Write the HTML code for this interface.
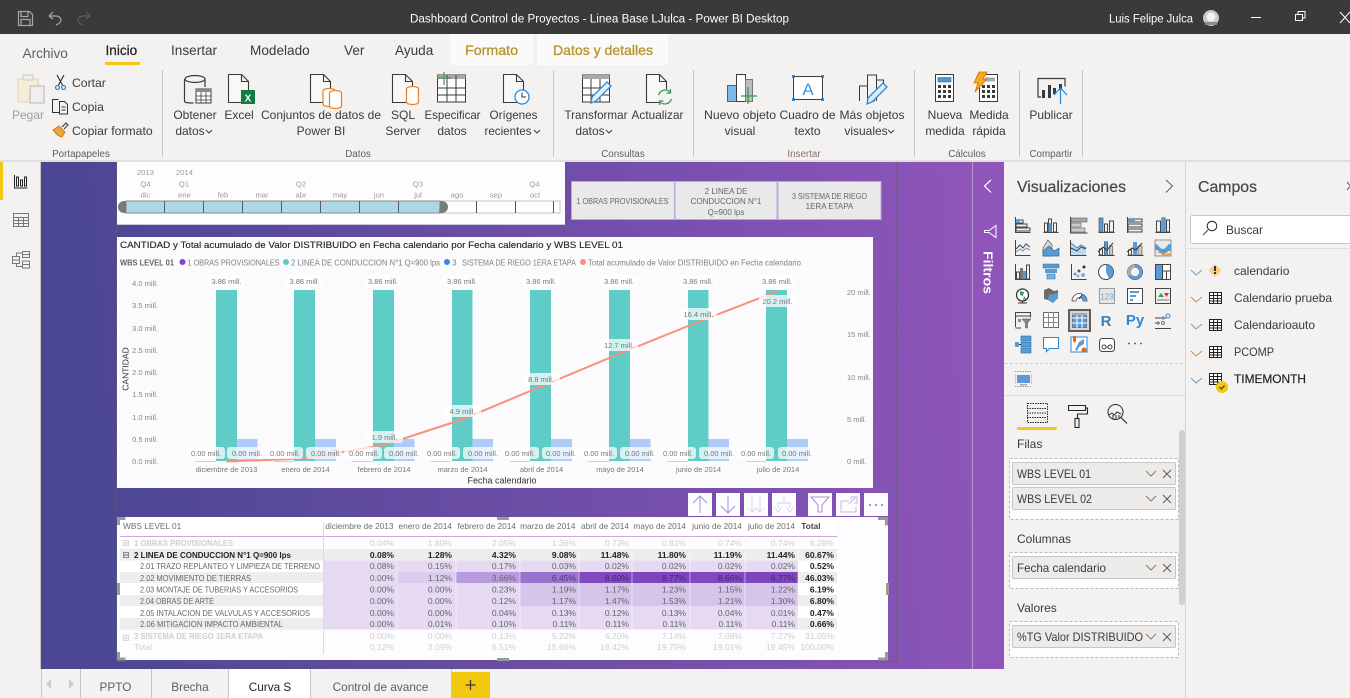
<!DOCTYPE html>
<html lang="es"><head><meta charset="utf-8"><title>Dashboard Control de Proyectos</title>
<style>
html,body{margin:0;padding:0;width:1350px;height:698px;overflow:hidden;background:#f3f2f1}
svg{display:block;font-family:"Liberation Sans",Arial,sans-serif}
.rb{font-size:12px;fill:#3b3a39;text-anchor:middle}
.rl{font-size:12.2px;fill:#3b3a39}
.gl{font-size:9.8px;fill:#605e5c;text-anchor:middle}
.tab{font-size:13.6px;fill:#3b3a39}
.i{fill:none;stroke:#3a3a3a;stroke-width:1.2}
.ic{fill:none;stroke:#444;stroke-width:1}
.bl{fill:#5b9bd5}
.tl{font-size:7.6px;fill:#9a9a9a;text-anchor:middle}
.ax{font-size:7.5px;fill:#858585}
.axm{font-size:7.5px;fill:#777;text-anchor:middle}
.dl{font-size:7.5px;fill:#777;text-anchor:middle}
.lg{font-size:8.2px;fill:#808080}
.slc{font-size:8px;fill:#666;text-anchor:middle}
.th{font-size:8.3px;fill:#6c6c6c;text-anchor:end}
.n{font-size:8.5px;fill:#666;text-anchor:end}
.f{font-size:8.5px;fill:#cfcfcf;text-anchor:end}
.bd{font-size:8.5px;fill:#222;font-weight:bold;text-anchor:end}
.lb{font-size:8.5px;fill:#666}
.ps{font-size:12px;fill:#3b3a39}
.sh{font-size:11.8px;fill:#605e5c;text-anchor:middle}
.fd{font-size:12px;fill:#3b3a39}
.och{fill:none;stroke:#c68a4e;stroke-width:1}
.bch{fill:none;stroke:#6c9cc4;stroke-width:1}
.act{fill:none;stroke:#a98fd6;stroke-width:1}
</style></head><body>
<svg width="1350" height="698" viewBox="0 0 1350 698" xmlns="http://www.w3.org/2000/svg">
<defs>
<linearGradient id="cv" gradientUnits="userSpaceOnUse" x1="100" y1="420" x2="975" y2="350">
<stop offset="0" stop-color="#4c4795"/><stop offset=".45" stop-color="#6a4da4"/><stop offset="1" stop-color="#8d55ba"/>
</linearGradient>
<g id="doc"><path d="M.5.5h13l7 7v21H.5zM13.500.5v7h7" fill="#f8f8f7" stroke="#3a3a3a" stroke-width="1.1"/></g>
<g id="cyl"><ellipse cx="6.500" cy="3" rx="6" ry="2.500" fill="#fff" stroke="#e8801e" stroke-width="1.200"/><path d="M.5 3v13c0 1.500 2.500 2.500 6 2.500s6-1 6-2.500V3" fill="#fff" stroke="#e8801e" stroke-width="1.200"/></g>
<path id="dn" d="M0 0l3 3 3-3" fill="none" stroke="#3b3a39" stroke-width="1"/>
<path id="pc" d="M0 0l5 5 5-5" fill="none" stroke="#8a7a6a" stroke-width="1"/>
<path id="cl" d="M0 0l8 8M8 0l-8 8" fill="none" stroke="#605e5c" stroke-width="1"/>
<g id="tbl"><rect x=".5" y=".5" width="12" height="11" fill="#fff" stroke="#222"/><path d="M.5 3.500h12M.5 6.500h12M.5 9h12M4.500 1v10M8.500 1v10" stroke="#222" stroke-width="1" fill="none"/></g>
</defs>

<!-- title bar -->
<rect width="1350" height="34" fill="#3b3a39"/>
<g fill="none" stroke="#a9a7a5" stroke-width="1.200">
<path d="M18.500 11.500h11l3 3v11h-14zM21 11.500v5h7v-5M21 25.500v-6h9v6"/>
<path d="M49 16l4-4M49 16h7c3 0 5 2 5 4s-2 4-5 5M49 16l4 3" />
</g>
<path d="M90 16l-4-4M90 16h-7c-3 0-5 2-5 4s2 4 5 5M90 16l-4 3" fill="none" stroke="#5e5d5b" stroke-width="1.200"/>
<text x="410" y="22.500" font-size="12.300" fill="#fff" textLength="379" lengthAdjust="spacingAndGlyphs">Dashboard Control de Proyectos - Linea Base LJulca - Power BI Desktop</text>
<text x="1109" y="22.500" font-size="12.300" fill="#fff" textLength="84" lengthAdjust="spacingAndGlyphs">Luis Felipe Julca</text>
<circle cx="1211" cy="18" r="8" fill="#c9c9c9"/><circle cx="1211" cy="17" r="4.500" fill="#f2f2f2"/><rect x="1205" y="22" width="12" height="3" fill="#8c8c8c"/>
<path d="M1251 17.500h10" stroke="#fff"/>
<path d="M1295.500 20.500h7v-6h-7zM1298 14v-2.500h7v6.500h-2.500" fill="none" stroke="#fff" stroke-width="1"/>
<path d="M1340 12l10 11M1350 12l-10 11" stroke="#fff" stroke-width="1"/>

<!-- ribbon -->
<rect y="34" width="1350" height="127" fill="#f3f2f1"/>
<rect x="450" y="34" width="83" height="31" fill="#fbfafa"/>
<rect x="537" y="34" width="131" height="31" fill="#fbfafa"/>
<text x="22.500" y="58" class="tab" style="fill:#605e5c">Archivo</text>
<text x="105.500" y="55" class="tab" style="font-weight:500;fill:#252423" stroke="#252423" stroke-width=".25">Inicio</text>
<rect x="105" y="62" width="35" height="3" fill="#f2c811"/>
<text x="171" y="55" class="tab">Insertar</text>
<text x="250" y="55" class="tab">Modelado</text>
<text x="344" y="55" class="tab">Ver</text>
<text x="395" y="55" class="tab">Ayuda</text>
<text x="465" y="55" class="tab" style="fill:#b8962e" stroke="#b8962e" stroke-width=".35" textLength="53" lengthAdjust="spacingAndGlyphs">Formato</text>
<text x="553" y="55" class="tab" style="fill:#b8962e" stroke="#b8962e" stroke-width=".35" textLength="100" lengthAdjust="spacingAndGlyphs">Datos y detalles</text>
<g stroke="#c8c6c4"><path d="M162.500 70v87M553.500 70v87M693.500 70v87M914.500 70v87M1019.500 70v87M1082.500 70v87"/></g>

<!-- Portapapeles -->
<rect x="18" y="79" width="20" height="23" fill="#f7ecd9" stroke="#e8cfa6"/><rect x="23" y="75" width="10" height="5" fill="#eee" stroke="#c9c7c5"/>
<rect x="30" y="86" width="14" height="17" fill="#f0efee" stroke="#b8b6b4"/>
<text x="28" y="119" class="rb" style="fill:#a19f9d">Pegar</text>
<path d="M57 75l6 11M64 75l-6 11" stroke="#333" stroke-width="1.200"/><circle cx="57.500" cy="87.500" r="2" fill="none" stroke="#2b88d8" stroke-width="1.200"/><circle cx="63.500" cy="87.500" r="2" fill="none" stroke="#2b88d8" stroke-width="1.200"/>
<text x="72" y="87" class="rl">Cortar</text>
<path d="M59 112.500h-6.500v-13h6M59.500 101.500h5l3 3v9.500h-8zM61.500 107h4M61.500 110h4" fill="none" stroke="#333"/>
<text x="72" y="111" class="rl">Copia</text>
<path d="M53 130l6-4 6 6-3 5c-3 0-6-3-9-7z" fill="#f0a33a" stroke="#c96f00" stroke-width=".8"/><path d="M62 127l4-4 2 2-4 4" fill="none" stroke="#333"/>
<text x="72" y="135" class="rl">Copiar formato</text>
<text x="81" y="157" class="gl">Portapapeles</text>

<!-- Datos -->
<g class="i"><path d="M184.500 79v22c0 1.500 2 2 9 2"/><ellipse cx="195" cy="79" rx="10" ry="3.500"/><path d="M205 79v8"/></g>
<rect x="196" y="89" width="15" height="14" fill="#fff" stroke="#3a3a3a"/><rect x="196" y="89" width="15" height="3" fill="#888"/><path d="M196 96h15M196 100h15M201 92v11M206 92v11" stroke="#3a3a3a" fill="none" stroke-width=".8"/>
<text x="195" y="119" class="rb">Obtener</text><text x="190" y="135" class="rb">datos</text><use href="#dn" x="206" y="130"/>
<use href="#doc" x="228" y="74"/><rect x="241" y="90" width="14" height="14" fill="#107c41"/><text x="248" y="101.500" font-size="10" font-weight="bold" fill="#fff" text-anchor="middle">X</text>
<text x="239" y="119" class="rb">Excel</text>
<use href="#doc" x="310" y="74"/><use href="#cyl" x="322.500" y="88"/><use href="#cyl" x="329" y="90"/>
<text x="321" y="119" class="rb" textLength="120" lengthAdjust="spacingAndGlyphs">Conjuntos de datos de</text><text x="321" y="135" class="rb">Power BI</text>
<use href="#doc" x="392" y="74"/><use href="#cyl" x="406" y="86"/>
<text x="403" y="119" class="rb">SQL</text><text x="403" y="135" class="rb">Server</text>
<rect x="437.500" y="75" width="28" height="27" fill="#fff" stroke="#3a3a3a"/><rect x="437.500" y="75" width="28" height="4" fill="#a8a8a8"/><path d="M437 88h29M437 95h29M447 75v27M456 75v27" stroke="#3a3a3a" fill="none"/><path d="M444 72v13M437 78h14" stroke="#4a9a5a" stroke-width="1.300"/>
<text x="452.500" y="119" class="rb" textLength="56" lengthAdjust="spacingAndGlyphs">Especificar</text><text x="452" y="135" class="rb">datos</text>
<use href="#doc" x="503" y="74"/><circle cx="522" cy="97" r="7" fill="#fff" stroke="#2b88d8" stroke-width="1.300"/><path d="M522 92.500v4.500h4" fill="none" stroke="#333"/>
<text x="513.500" y="119" class="rb" textLength="48" lengthAdjust="spacingAndGlyphs">Orígenes</text><text x="508" y="135" class="rb" textLength="47" lengthAdjust="spacingAndGlyphs">recientes</text><use href="#dn" x="534" y="130"/>
<text x="358" y="157" class="gl">Datos</text>

<!-- Consultas -->
<rect x="582.500" y="75" width="27" height="27" fill="#fff" stroke="#3a3a3a"/><rect x="582.500" y="75" width="27" height="4" fill="#a8a8a8"/><path d="M582 88h28M582 95h28M591 79v23M600 79v23" stroke="#3a3a3a" fill="none"/>
<path d="M592 97l15-15 4 4-15 15-5 2z" fill="#e3f0fa" stroke="#2b88d8" stroke-width="1.300"/>
<text x="596" y="119" class="rb" textLength="63" lengthAdjust="spacingAndGlyphs">Transformar</text><text x="590" y="135" class="rb">datos</text><use href="#dn" x="606" y="130"/>
<use href="#doc" x="646" y="74"/><circle cx="665" cy="97" r="8" fill="#f3f2f1"/><path d="M658.500 95a7 7 0 0 1 12-2.500M671.500 99a7 7 0 0 1-12 2.500M670.500 89v4h-4M659.500 105v-4h4" fill="none" stroke="#3c9a5f" stroke-width="1.300"/>
<text x="657.500" y="119" class="rb" textLength="52" lengthAdjust="spacingAndGlyphs">Actualizar</text>
<text x="623" y="157" class="gl">Consultas</text>

<!-- Insertar -->
<rect x="727.500" y="85.500" width="9" height="16" fill="#7db8ec" stroke="#1e6fb5"/><rect x="736.500" y="74.500" width="9" height="27" fill="#fff" stroke="#3a3a3a"/><rect x="745.500" y="79.500" width="7" height="22" fill="#bdbdbd" stroke="#777"/><path d="M748 87v17M741 96h16" stroke="#2e9e4f" stroke-width="1.300"/>
<text x="740" y="119" class="rb" textLength="72" lengthAdjust="spacingAndGlyphs">Nuevo objeto</text><text x="740" y="135" class="rb">visual</text>
<rect x="793.500" y="76.500" width="29" height="23" fill="#fff" stroke="#3a3a3a"/><g fill="#2b88d8"><rect x="792" y="75" width="3" height="3"/><rect x="821" y="75" width="3" height="3"/><rect x="792" y="98" width="3" height="3"/><rect x="821" y="98" width="3" height="3"/></g><text x="808" y="95" font-size="17" fill="#3a96dd" text-anchor="middle">A</text>
<text x="807.500" y="119" class="rb">Cuadro de</text><text x="807.500" y="135" class="rb">texto</text>
<path d="M859.500 101v-15h8v15M867.500 101V75h9v26M876.500 80h7v6" fill="none" stroke="#3a3a3a"/><path d="M868 101h7" stroke="#3a3a3a"/>
<path d="M868 98l15-15 4 4-15 15-5 2z" fill="#dcebf8" stroke="#2b88d8" stroke-width="1.300"/>
<text x="872" y="119" class="rb" textLength="65" lengthAdjust="spacingAndGlyphs">Más objetos</text><text x="866" y="135" class="rb">visuales</text><use href="#dn" x="888" y="130"/>
<text x="804" y="157" class="gl" style="fill:#8a6d6d">Insertar</text>

<!-- Calculos -->
<rect x="935.500" y="74.500" width="18" height="27" fill="#fff" stroke="#3a3a3a"/><rect x="938" y="77.500" width="13" height="4.500" fill="#4a9ad4" stroke="#1e6fb5" stroke-width=".6"/><g fill="#3a3a3a"><rect x="938" y="85" width="3" height="3"/><rect x="943" y="85" width="3" height="3"/><rect x="948" y="85" width="3" height="3"/><rect x="938" y="90" width="3" height="3"/><rect x="943" y="90" width="3" height="3"/><rect x="948" y="90" width="3" height="3"/><rect x="938" y="95" width="3" height="3"/><rect x="943" y="95" width="3" height="3"/><rect x="948" y="95" width="3" height="3"/></g>
<text x="945" y="119" class="rb">Nueva</text><text x="945" y="135" class="rb">medida</text>
<rect x="979.500" y="74.500" width="18" height="27" fill="#fff" stroke="#3a3a3a"/><rect x="985" y="77.500" width="10" height="4" fill="#a8a8a8"/><g fill="#3a3a3a"><rect x="982" y="85" width="3" height="3"/><rect x="987" y="85" width="3" height="3"/><rect x="992" y="85" width="3" height="3"/><rect x="982" y="90" width="3" height="3"/><rect x="987" y="90" width="3" height="3"/><rect x="992" y="90" width="3" height="3"/><rect x="982" y="95" width="3" height="3"/><rect x="987" y="95" width="3" height="3"/><rect x="992" y="95" width="3" height="3"/></g>
<path d="M979 72h8l-4 7h4l-12 13 3-9h-4z" fill="#f7a823" stroke="#c96f00" stroke-width=".8"/>
<text x="989" y="119" class="rb">Medida</text><text x="989" y="135" class="rb">rápida</text>
<text x="967" y="157" class="gl">Cálculos</text>

<!-- Publicar -->
<path d="M1038 94v-15.500h27v8M1041 97h-3v-3" fill="none" stroke="#3a3a3a" stroke-width="1.200"/>
<rect x="1042" y="90" width="3" height="8" fill="#3a3a3a"/><rect x="1048" y="85" width="3" height="13" fill="#3a3a3a"/><rect x="1053" y="88" width="3" height="6" fill="#3a3a3a"/><rect x="1059" y="84" width="3" height="6" fill="#3a3a3a"/>
<path d="M1060.500 104V89M1054 95l6.500-7 6.500 7" fill="none" stroke="#2b88d8" stroke-width="1.200"/>
<text x="1051" y="119" class="rb">Publicar</text>
<text x="1051" y="157" class="gl">Compartir</text>

<rect y="160" width="1350" height="2" fill="#e1dfdd"/>

<!-- left nav -->
<rect y="162" width="41" height="507" fill="#f3f2f1"/>
<rect x="40" y="162" width="1" height="507" fill="#c8c6c4"/>
<rect y="162" width="3" height="38" fill="#f2c811"/>
<path d="M14.500 175v13h13M16.500 186v-9h2v9zM20.500 186v-6h2v6zM24.500 186v-9h2v9z" fill="none" stroke="#252423" stroke-width="1"/>
<g fill="none" stroke="#7a7876" stroke-width="1"><rect x="13.500" y="213.500" width="15" height="13"/><path d="M13 217.500h16M13 220.500h16M13 223.500h16M18.500 217v10M23.500 217v10"/>
<rect x="12.500" y="256.500" width="7" height="7"/><path d="M13 260h6"/><rect x="22.500" y="251.500" width="7" height="6"/><path d="M23 254.500h6"/><rect x="22.500" y="261" width="7" height="7"/><path d="M23 264.500h6M16.500 256v-3h6M16.500 264v2.500h6"/></g>

<!-- canvas -->
<rect x="41" y="162" width="931" height="507" fill="url(#cv)"/>
<path d="M116.500 162v499.500h780V162" fill="none" stroke="#5f5f6a" stroke-width="1.400" stroke-dasharray="1.500 1.500"/>

<!-- timeline slicer -->
<rect x="117" y="162" width="448" height="63" fill="#fdfcfe"/>
<rect x="117" y="224" width="448" height="1" fill="#cfc8df"/>
<g class="tl"><text x="145.500" y="175">2013</text><text x="184.500" y="175">2014</text>
<text x="145.500" y="186.500">Q4</text><text x="184" y="186.500">Q1</text><text x="301" y="186.500">Q2</text><text x="418" y="186.500">Q3</text><text x="534.500" y="186.500">Q4</text>
<text x="145.500" y="197.500">dic</text><text x="184.500" y="197.500">ene</text><text x="223" y="197.500">feb</text><text x="262" y="197.500">mar</text><text x="301" y="197.500">abr</text><text x="340" y="197.500">may</text><text x="379" y="197.500">jun</text><text x="418" y="197.500">jul</text><text x="457" y="197.500">ago</text><text x="496" y="197.500">sep</text><text x="535" y="197.500">oct</text></g>
<rect x="440" y="201" width="120" height="12" fill="#fff" stroke="#c4c4cc"/>
<rect x="126" y="201" width="314" height="12" fill="#acd7e6" stroke="#8a8a8a"/>
<g stroke="#5a5a64"><path d="M164.500 201v12M203.500 201v12M242.500 201v12M281.500 201v12M320.500 201v12M359.500 201v12M398.500 201v12M476.500 201v12M515.500 201v12M553.500 201v12"/></g>
<path d="M126 201h-2a6 6 0 0 0 0 12h2zM440 201h2a6 6 0 0 1 0 12h-3z" fill="#7a7a7a"/>

<!-- slicer buttons -->
<g fill="#e9e9e9" stroke="#b9a6dc"><rect x="571.500" y="181.500" width="103" height="38"/><rect x="675" y="181.500" width="102" height="38"/><rect x="778" y="181.500" width="103" height="38"/></g>
<text x="622.500" y="204" class="slc" textLength="92" lengthAdjust="spacingAndGlyphs">1 OBRAS PROVISIONALES</text>
<text x="726" y="194" class="slc">2 LINEA DE</text><text x="726" y="204" class="slc">CONDUCCION N°1</text><text x="726" y="215" class="slc">Q=900 lps</text>
<text x="829.500" y="199" class="slc" textLength="75" lengthAdjust="spacingAndGlyphs">3 SISTEMA DE RIEGO</text><text x="829.500" y="209" class="slc">1ERA ETAPA</text>

<!-- chart -->
<rect x="117" y="237" width="756" height="251" fill="#fbfafd"/>
<text x="120" y="248" font-size="9.600" fill="#222" textLength="503" lengthAdjust="spacingAndGlyphs" stroke="#222" stroke-width=".12">CANTIDAD y Total acumulado de Valor DISTRIBUIDO en Fecha calendario por Fecha calendario y WBS LEVEL 01</text>
<text x="120" y="265.500" font-size="8.200" font-weight="bold" fill="#666" textLength="54" lengthAdjust="spacingAndGlyphs">WBS LEVEL 01</text>
<circle cx="182.500" cy="262" r="3" fill="#7e46c0"/><text x="187.500" y="265.500" class="lg" textLength="92" lengthAdjust="spacingAndGlyphs">1 OBRAS PROVISIONALES</text>
<circle cx="286" cy="262" r="3" fill="#5fccc7"/><text x="291" y="265.500" class="lg" textLength="149" lengthAdjust="spacingAndGlyphs">2 LINEA DE CONDUCCION N°1 Q=900 lps</text>
<circle cx="447" cy="262" r="3" fill="#3a86f0"/><text x="452" y="265.500" class="lg">3</text><text x="462" y="265.500" class="lg" textLength="114" lengthAdjust="spacingAndGlyphs">SISTEMA DE RIEGO 1ERA ETAPA</text>
<circle cx="583" cy="262" r="3" fill="#fc8f7a"/><text x="588" y="265.500" class="lg" textLength="213" lengthAdjust="spacingAndGlyphs">Total acumulado de Valor DISTRIBUIDO en Fecha calendario</text>

<g class="ax" text-anchor="end"><text x="158" y="286">4.0 mill.</text><text x="158" y="308">3.5 mill.</text><text x="158" y="331">3.0 mill.</text><text x="158" y="353">2.5 mill.</text><text x="158" y="375">2.0 mill.</text><text x="158" y="397">1.5 mill.</text><text x="158" y="420">1.0 mill.</text><text x="158" y="442">0.5 mill.</text><text x="158" y="464">0.0 mill.</text></g>
<g class="ax"><text x="847" y="295">20 mill.</text><text x="847" y="337">15 mill.</text><text x="847" y="380">10 mill.</text><text x="847" y="422">5 mill.</text><text x="847" y="464">0 mill.</text></g>
<text transform="translate(128.500 369) rotate(-90)" font-size="8.500" fill="#333" text-anchor="middle">CANTIDAD</text>

<g fill="#aecbfa"><rect x="237" y="439" width="20.500" height="22"/><rect x="315" y="439" width="21" height="22"/><rect x="394" y="439" width="20.500" height="22"/><rect x="472" y="439" width="21" height="22"/><rect x="551" y="439" width="21" height="22"/><rect x="630" y="439" width="20.500" height="22"/><rect x="708" y="439" width="21" height="22"/><rect x="787" y="439" width="21" height="22"/></g>
<g fill="#d8c8ee"><rect x="195" y="461" width="21" height="1"/><rect x="274" y="461" width="20" height="1"/><rect x="352" y="461" width="21" height="1"/><rect x="431" y="461" width="20" height="1"/><rect x="510" y="461" width="20" height="1"/><rect x="588" y="461" width="21" height="1"/><rect x="667" y="461" width="21" height="1"/><rect x="746" y="461" width="20" height="1"/></g>
<g fill="#5fccc7"><rect x="216" y="290" width="21" height="171"/><rect x="294" y="290" width="21" height="171"/><rect x="373" y="290" width="21" height="171"/><rect x="452" y="290" width="20.500" height="171"/><rect x="530" y="290" width="21" height="171"/><rect x="609" y="290" width="21" height="171"/><rect x="688" y="290" width="20.500" height="171"/><rect x="766" y="290" width="21" height="171"/></g>

<polyline points="226.500,461.500 305,458.500 384,445 462,419.500 541,386.500 620,353.500 698,322 778,291" fill="none" stroke="#fc8f7a" stroke-width="2"/>

<!-- pills -->
<g fill="#fff" fill-opacity=".72">
<rect x="207" y="275" width="38" height="11" rx="3"/><rect x="285" y="275" width="38" height="11" rx="3"/><rect x="364" y="275" width="38" height="11" rx="3"/><rect x="443" y="275" width="38" height="11" rx="3"/><rect x="522" y="275" width="38" height="11" rx="3"/><rect x="600" y="275" width="38" height="11" rx="3"/><rect x="679" y="275" width="38" height="11" rx="3"/><rect x="758" y="275" width="38" height="11" rx="3"/>
<rect x="366" y="431" width="37" height="12" rx="3"/><rect x="444" y="405" width="37" height="12" rx="3"/><rect x="522" y="373" width="38" height="12" rx="3"/><rect x="600" y="339" width="38" height="12" rx="3"/><rect x="680" y="308" width="37" height="12" rx="3"/><rect x="759" y="295" width="37" height="12" rx="3"/>
<rect x="187" y="447" width="38" height="12" rx="3"/><rect x="227" y="447" width="36" height="12" rx="3"/><rect x="266" y="447" width="37" height="12" rx="3"/><rect x="306" y="447" width="36" height="12" rx="3"/><rect x="344" y="447" width="38" height="12" rx="3"/><rect x="384" y="447" width="36" height="12" rx="3"/><rect x="423" y="447" width="37" height="12" rx="3"/><rect x="463" y="447" width="36" height="12" rx="3"/><rect x="501" y="447" width="38" height="12" rx="3"/><rect x="542" y="447" width="36" height="12" rx="3"/><rect x="580" y="447" width="37" height="12" rx="3"/><rect x="620" y="447" width="36" height="12" rx="3"/><rect x="658" y="447" width="38" height="12" rx="3"/><rect x="699" y="447" width="36" height="12" rx="3"/><rect x="737" y="447" width="37" height="12" rx="3"/><rect x="778" y="447" width="36" height="12" rx="3"/>
</g>
<g class="dl">
<text x="226.500" y="284">3.86 mill.</text><text x="304.500" y="284">3.86 mill.</text><text x="383" y="284">3.86 mill.</text><text x="462" y="284">3.86 mill.</text><text x="541" y="284">3.86 mill.</text><text x="619" y="284">3.86 mill.</text><text x="698" y="284">3.86 mill.</text><text x="777" y="284">3.86 mill.</text>
<text x="384.500" y="440">1.9 mill.</text><text x="462.500" y="414">4.9 mill.</text><text x="541" y="382">8.8 mill.</text><text x="619" y="348">12.7 mill.</text><text x="698.500" y="317">16.4 mill.</text><text x="777.500" y="304">20.2 mill.</text>
<text x="206" y="456">0.00 mill.</text><text x="247" y="456">0.00 mill.</text><text x="285" y="456">0.00 mill.</text><text x="326" y="456">0.00 mill.</text><text x="364" y="456">0.00 mill.</text><text x="404" y="456">0.00 mill.</text><text x="442" y="456">0.00 mill.</text><text x="483" y="456">0.00 mill.</text><text x="520" y="456">0.00 mill.</text><text x="561" y="456">0.00 mill.</text><text x="599" y="456">0.00 mill.</text><text x="640" y="456">0.00 mill.</text><text x="678" y="456">0.00 mill.</text><text x="719" y="456">0.00 mill.</text><text x="756" y="456">0.00 mill.</text><text x="797" y="456">0.00 mill.</text>
</g>
<g class="axm"><text x="226.500" y="472">diciembre de 2013</text><text x="305.500" y="472">enero de 2014</text><text x="384" y="472">febrero de 2014</text><text x="462.500" y="472">marzo de 2014</text><text x="541.500" y="472">abril de 2014</text><text x="620" y="472">mayo de 2014</text><text x="698.500" y="472">junio de 2014</text><text x="778" y="472">julio de 2014</text></g>
<text x="502" y="483.500" font-size="9" fill="#333" text-anchor="middle">Fecha calendario</text>

<!-- action buttons -->
<g fill="#fdfcfe"><rect x="688" y="493" width="24" height="23"/><rect x="716" y="493" width="24" height="23"/><rect x="744" y="493" width="24" height="23"/><rect x="772" y="493" width="24" height="23"/><rect x="808" y="493" width="24" height="23"/><rect x="836" y="493" width="24" height="23"/><rect x="864" y="493" width="24" height="23"/></g>
<path class="act" d="M700 513v-17M693 503l7-7 7 7M728 496v17M721 506l7 7 7-7"/>
<path d="M752 496v16M760 496v16M748 508l4 4 4-4M756 508l4 4 4-4M784 496v7M778 508v-5h12v5M775 508l3 4 3-4M787 508l3 4 3-4" fill="none" stroke="#ddd3ee"/>
<path class="act" d="M811 497h18l-7 8v7h-4v-7z"/>
<path d="M851 500v-3h6v6h-3M849 504l7-7M841 501h8M841 501v11h15v-5" fill="none" stroke="#c5b8e2"/>
<g fill="#a98fd6"><rect x="869" y="504" width="2" height="2"/><rect x="875" y="504" width="2" height="2"/><rect x="881" y="504" width="2" height="2"/></g>

<!-- matrix -->
<rect x="117" y="517" width="771" height="143" fill="#fdfcfe"/>
<rect x="120" y="518" width="717" height="18" fill="#fff"/>
<rect x="120" y="536" width="717" height="1" fill="#c9a8e8"/>
<rect x="120" y="549" width="717" height="11.500" fill="#ededed"/>
<g fill="#ffffff"><rect x="120" y="560.500" width="717" height="11.500"/><rect x="120" y="583" width="717" height="12"/><rect x="120" y="606" width="717" height="12"/></g>
<g fill="#ededed"><rect x="120" y="572" width="717" height="11"/><rect x="120" y="595" width="717" height="11"/><rect x="120" y="618" width="717" height="11.500"/></g>
<rect x="323" y="560.500" width="475" height="11.500" fill="#e6daf3"/>
<rect x="323" y="572" width="74" height="11" fill="#e6daf3"/><rect x="397" y="572" width="59" height="11" fill="#dccdef"/><rect x="456" y="572" width="64" height="11" fill="#b89bdc"/><rect x="520" y="572" width="59" height="11" fill="#9a73cd"/><rect x="579" y="572" width="53" height="11" fill="#8148c0"/><rect x="632" y="572" width="58" height="11" fill="#7f45bf"/><rect x="690" y="572" width="55" height="11" fill="#8148c0"/><rect x="745" y="572" width="53" height="11" fill="#7f45bf"/>
<rect x="323" y="583" width="197" height="23" fill="#e5d9f3"/><rect x="520" y="583" width="278" height="23" fill="#d6c5ea"/>
<rect x="323" y="606" width="475" height="23.500" fill="#e6daf3"/>
<path d="M397 560v70M456 560v70M520 560v70M579 536v94M632 536v94M690 536v94M745 536v94M798 536v94" stroke="#fff" stroke-opacity=".5"/>
<path d="M323.500 522v132" stroke="#dcdcdc"/>
<text x="123" y="529" class="th" style="text-anchor:start">WBS LEVEL 01</text>
<text x="393.500" y="529" class="th">diciembre de 2013</text><text x="452" y="529" class="th">enero de 2014</text><text x="516" y="529" class="th">febrero de 2014</text><text x="575.500" y="529" class="th">marzo de 2014</text><text x="629" y="529" class="th">abril de 2014</text><text x="686" y="529" class="th">mayo de 2014</text><text x="742" y="529" class="th">junio de 2014</text><text x="795" y="529" class="th">julio de 2014</text><text x="820.500" y="529" class="th" style="font-weight:bold;fill:#444">Total</text>

<g fill="none" stroke="#d8d8d8"><rect x="123.500" y="540.500" width="5" height="5"/><path d="M124 543h4M126 541v4"/><rect x="123.500" y="635.500" width="5" height="5"/><path d="M124 638h4M126 636v4"/></g>
<rect x="123.500" y="552.500" width="5" height="5" fill="none" stroke="#888"/><path d="M124 555h4" stroke="#666"/>

<text x="134" y="546" class="lb" style="font-weight:bold;fill:#cfcfcf" textLength="99" lengthAdjust="spacingAndGlyphs">1 OBRAS PROVISIONALES</text>
<text x="134" y="558" class="lb" style="font-weight:bold;fill:#222" textLength="157" lengthAdjust="spacingAndGlyphs">2 LINEA DE CONDUCCION N°1 Q=900 lps</text>
<text x="140" y="569" class="lb" textLength="180" lengthAdjust="spacingAndGlyphs">2.01 TRAZO REPLANTEO Y LIMPIEZA DE TERRENO</text>
<text x="140" y="581" class="lb" textLength="111" lengthAdjust="spacingAndGlyphs">2.02 MOVIMIENTO DE TIERRAS</text>
<text x="140" y="592.500" class="lb" textLength="158" lengthAdjust="spacingAndGlyphs">2.03 MONTAJE DE TUBERIAS Y ACCESORIOS</text>
<text x="140" y="604" class="lb" textLength="74" lengthAdjust="spacingAndGlyphs">2.04 OBRAS DE ARTE</text>
<text x="140" y="616" class="lb" textLength="170" lengthAdjust="spacingAndGlyphs">2.05 INTALACION DE VALVULAS Y ACCESORIOS</text>
<text x="140" y="627" class="lb" textLength="143" lengthAdjust="spacingAndGlyphs">2.06 MITIGACION IMPACTO AMBIENTAL</text>
<text x="134" y="639" class="lb" style="font-weight:bold;fill:#cfcfcf" textLength="129" lengthAdjust="spacingAndGlyphs">3 SISTEMA DE RIEGO 1ERA ETAPA</text>
<text x="134" y="650" class="lb" style="fill:#cfcfcf">Total</text>

<g class="f"><text x="394" y="546">0.04%</text><text x="452" y="546">1.80%</text><text x="516" y="546">2.05%</text><text x="576" y="546">1.36%</text><text x="629" y="546">0.73%</text><text x="686" y="546">0.81%</text><text x="742" y="546">0.74%</text><text x="795" y="546">0.74%</text><text x="834" y="546">8.28%</text></g>
<g class="bd"><text x="394" y="558">0.08%</text><text x="452" y="558">1.28%</text><text x="516" y="558">4.32%</text><text x="576" y="558">9.08%</text><text x="629" y="558">11.48%</text><text x="686" y="558">11.80%</text><text x="742" y="558">11.19%</text><text x="795" y="558">11.44%</text><text x="834" y="558">60.67%</text></g>
<g class="n"><text x="394" y="569">0.08%</text><text x="452" y="569">0.15%</text><text x="516" y="569">0.17%</text><text x="576" y="569">0.03%</text><text x="629" y="569">0.02%</text><text x="686" y="569">0.02%</text><text x="742" y="569">0.02%</text><text x="795" y="569">0.02%</text><text x="834" y="569" style="font-weight:bold;fill:#222">0.52%</text></g>
<g class="n"><text x="394" y="581">0.00%</text><text x="452" y="581">1.12%</text><text x="516" y="581">3.66%</text><text x="576" y="581" style="fill:#4d3a70">6.45%</text><text x="629" y="581" style="fill:#3f2a66">8.60%</text><text x="686" y="581" style="fill:#3f2a66">8.77%</text><text x="742" y="581" style="fill:#3f2a66">8.66%</text><text x="795" y="581" style="fill:#3f2a66">8.77%</text><text x="834" y="581" style="font-weight:bold;fill:#222">46.03%</text></g>
<g class="n"><text x="394" y="592.500">0.00%</text><text x="452" y="592.500">0.00%</text><text x="516" y="592.500">0.23%</text><text x="576" y="592.500">1.19%</text><text x="629" y="592.500">1.17%</text><text x="686" y="592.500">1.23%</text><text x="742" y="592.500">1.15%</text><text x="795" y="592.500">1.22%</text><text x="834" y="592.500" style="font-weight:bold;fill:#222">6.19%</text></g>
<g class="n"><text x="394" y="604">0.00%</text><text x="452" y="604">0.00%</text><text x="516" y="604">0.12%</text><text x="576" y="604">1.17%</text><text x="629" y="604">1.47%</text><text x="686" y="604">1.53%</text><text x="742" y="604">1.21%</text><text x="795" y="604">1.30%</text><text x="834" y="604" style="font-weight:bold;fill:#222">6.80%</text></g>
<g class="n"><text x="394" y="616">0.00%</text><text x="452" y="616">0.00%</text><text x="516" y="616">0.04%</text><text x="576" y="616">0.13%</text><text x="629" y="616">0.12%</text><text x="686" y="616">0.13%</text><text x="742" y="616">0.04%</text><text x="795" y="616">0.01%</text><text x="834" y="616" style="font-weight:bold;fill:#222">0.47%</text></g>
<g class="n"><text x="394" y="627">0.00%</text><text x="452" y="627">0.01%</text><text x="516" y="627">0.10%</text><text x="576" y="627">0.11%</text><text x="629" y="627">0.11%</text><text x="686" y="627">0.11%</text><text x="742" y="627">0.11%</text><text x="795" y="627">0.11%</text><text x="834" y="627" style="font-weight:bold;fill:#222">0.66%</text></g>
<g class="f"><text x="394" y="639">0.00%</text><text x="452" y="639">0.00%</text><text x="516" y="639">0.13%</text><text x="576" y="639">5.22%</text><text x="629" y="639">4.20%</text><text x="686" y="639">7.14%</text><text x="742" y="639">7.09%</text><text x="795" y="639">7.27%</text><text x="834" y="639">31.05%</text></g>
<g class="f"><text x="394" y="650">0.12%</text><text x="452" y="650">3.09%</text><text x="516" y="650">6.51%</text><text x="576" y="650">15.66%</text><text x="629" y="650">16.42%</text><text x="686" y="650">19.75%</text><text x="742" y="650">19.01%</text><text x="795" y="650">19.45%</text><text x="834" y="650">100.00%</text></g>
<g fill="none" stroke="#9a9a9a" stroke-width="3"><path d="M118.500 525v-6.500h7M878 518.500h8.500v7M118.500 652v7h7M878 659h8.500v-7"/></g>
<g fill="#9a9a9a"><rect x="117" y="583" width="3" height="12"/><rect x="886" y="583" width="3" height="12"/><rect x="497" y="517" width="12" height="3"/><rect x="497" y="658" width="12" height="3"/></g>

<!-- filter pane -->
<rect x="972" y="162" width="32" height="507" fill="#8f55bb"/>
<rect x="972" y="162" width="1" height="507" fill="#b59ad0"/>
<path d="M991 180l-6.500 6 6.500 6.500" fill="none" stroke="#fff" stroke-width="1.200"/>
<path d="M996 225.500v12l-7-5h-4.500v-2h4.500z" fill="none" stroke="#fff" stroke-width="1"/>
<text transform="translate(983.500 251) rotate(90)" font-size="13" font-weight="bold" fill="#fff" textLength="43" lengthAdjust="spacingAndGlyphs">Filtros</text>

<!-- viz pane -->
<rect x="1004" y="162" width="181" height="536" fill="#f3f2f1"/>
<rect x="1185" y="162" width="1" height="536" fill="#d8d6d4"/>
<text x="1017" y="192" font-size="15.500" fill="#484644" stroke="#484644" stroke-width=".2" textLength="109" lengthAdjust="spacingAndGlyphs">Visualizaciones</text>
<path d="M1166 180l6.500 6-6.500 6.500" fill="none" stroke="#605e5c" stroke-width="1"/>

<g transform="translate(1015 217)"><path class="ic" d="M.5 0v15.500h15M1 3h7v3H1zM1 7h11v3H1zM1 11h14v3H1z" /><rect x="1" y="3" width="4" height="3" class="bl"/></g>
<g transform="translate(1043 217)"><path class="ic" d="M.5 15.500h15M1.500 6h3v9h-3zM5.500 2h3v13h-3zM10.500 6h3v9h-3z"/><rect x="5.500" y="6" width="3" height="9" class="bl"/></g>
<g transform="translate(1070 217)"><path d="M.5 0v16h17" class="ic"/><rect x="1" y="1" width="16" height="4" fill="#aaa" stroke="#444" stroke-width=".5"/><rect x="1" y="6" width="10" height="4" fill="#ccc" stroke="#444" stroke-width=".5"/><rect x="1" y="11" width="14" height="4" fill="#ccc" stroke="#444" stroke-width=".5"/></g>
<g transform="translate(1098 217)"><rect x="1" y="1" width="4" height="14" class="bl" stroke="#444" stroke-width=".6"/><path class="ic" d="M.5 15.500h16M6.500 7h3v8h-3zM11.500 4h4v11h-4z"/></g>
<g transform="translate(1127 217)"><path d="M.5 16V0" class="ic"/><path class="ic" d="M1 2h14v3H1zM1 7h14v3H1zM1 12h14v3H1z"/><rect x="1" y="2" width="7" height="3" class="bl"/></g>
<g transform="translate(1155 217)"><path class="ic" d="M.5 15.500h15M1.500 4h4v11h-4zM7 1h3v14H7zM11.500 3h3v12h-3z"/><rect x="7" y="1" width="3" height="14" class="bl"/></g>
<g transform="translate(1015 240)"><path class="ic" d="M.5 0v15.500h15"/><path d="M1 9l4-4 3 3 3-4 4 3" fill="none" stroke="#444"/><path d="M1 12l4-3 3 2 3-3 4 2" fill="none" stroke="#5b9bd5"/></g>
<g transform="translate(1043 240)"><path d="M0 8l5-8 4 5v11H0z" fill="#d8d8d8" stroke="#555" stroke-width=".7"/><path d="M0 16V11l6-5 5 5 5-3v8z" class="bl" stroke="#2b6ca3" stroke-width=".7"/></g>
<g transform="translate(1070 240)"><path d="M.5 0v15.500h16" class="ic"/><path d="M1 3l6 5 4-3 5 3v7H1z" fill="#bcd7ee"/><path d="M1 8l6 3 4-4 5 2" fill="none" stroke="#444"/><path d="M1 3l6 5 4-3 5 3" fill="none" stroke="#2b88d8"/></g>
<g transform="translate(1098 240)"><path class="ic" d="M.5 15.500h16M1.500 9h3v6h-3zM6.500 2h3v13h-3z"/><rect x="6.500" y="2" width="3" height="13" class="bl"/><rect x="11.500" y="6" width="3" height="9" fill="#ccc" stroke="#444" stroke-width=".6"/><path d="M0 12l5-5 4 3 6-7" fill="none" stroke="#333"/></g>
<g transform="translate(1127 240)"><path class="ic" d="M.5 15.500h16M1.500 10h3v5h-3z"/><rect x="6" y="2" width="4" height="13" class="bl"/><rect x="11" y="6" width="4" height="9" fill="#ccc" stroke="#444" stroke-width=".6"/><path d="M0 12l5-4 4 2 6-7" fill="none" stroke="#333"/></g>
<g transform="translate(1155 240)"><rect width="16" height="16" fill="#eaeaea" stroke="#555" stroke-width=".6"/><path d="M0 4c4 0 4 5 8 5s4-6 8-5v7c-4-1-4 3-8 3s-4-5-8-4z" class="bl"/><path d="M0 12h5l3 4h8v-3l-6 1z" fill="#e8a33a"/></g>
<g transform="translate(1015 264)"><path class="ic" d="M.5 0v15.500h15M1.500 8h3v7h-3zM11.500 1h3v14h-3z"/><rect x="5" y="4" width="3" height="11" fill="#777"/><rect x="8" y="7" width="3" height="8" class="bl"/></g>
<g transform="translate(1043 264)"><path d="M0 0h16v4H0z" class="bl" stroke="#2b6ca3" stroke-width=".5"/><path d="M2 5h12v4H2z" class="bl"/><path d="M4 10h8v5H4z" fill="#79b1e0" stroke="#2b6ca3" stroke-width=".6"/></g>
<g transform="translate(1071 264)"><path class="ic" d="M.5 0v15.500h15"/><circle cx="4" cy="10" r="1.500" fill="#5b9bd5"/><circle cx="8" cy="7" r="1.500" fill="#555"/><circle cx="13" cy="3" r="1.500" fill="#333"/><circle cx="12" cy="11" r="2" fill="#79b1e0"/><circle cx="7" cy="12" r="1.500" fill="#79b1e0"/></g>
<g transform="translate(1098 264)"><circle cx="8" cy="8" r="7.500" fill="#fff" stroke="#444"/><path d="M8 8V.5a7.500 7.500 0 0 1 3 14.300z" class="bl" /></g>
<g transform="translate(1127 264)"><circle cx="8" cy="8" r="6" fill="none" stroke="#5b9bd5" stroke-width="3.500"/><circle cx="8" cy="8" r="7.800" fill="none" stroke="#555" stroke-width=".5"/><path d="M8 2a6 6 0 0 0-5 9" fill="none" stroke="#aaa" stroke-width="3.500"/></g>
<g transform="translate(1155 264)"><rect x=".5" y=".5" width="15" height="15" fill="#fff" stroke="#444"/><rect x="1" y="1" width="6" height="14" class="bl"/><path d="M7.500 0v16M7.500 7h8M11.500 7v9" class="ic"/></g>
<g transform="translate(1015 288)"><circle cx="7.500" cy="7" r="6" fill="#fff" stroke="#333" stroke-width="1.300"/><path d="M5 3l4 1-1 4-3-1zM9 8l2 3-3 1z" fill="#3c9a5f"/><path d="M3 15h9M7.500 13v2" stroke="#333"/></g>
<g transform="translate(1043 288)"><path d="M1 2l5-2 5 3 4-1v8l-5 5-5-3-4-1z" fill="#6b6b6b"/><path d="M6 7l9-2v5l-5 5-5-3z" class="bl"/></g>
<g transform="translate(1071 288)"><path d="M1 13a7.500 7.500 0 0 1 15 0h-4a3.500 3.500 0 0 0-7 0z" fill="#fff" stroke="#444" stroke-width=".8"/><path d="M10 5.800a7.500 7.500 0 0 1 6 7.200h-4a3.500 3.500 0 0 0-2-3z" class="bl"/><path d="M8 11l3-4" stroke="#333"/></g>
<g transform="translate(1099 288)"><rect x=".5" y=".5" width="15" height="15" fill="#e6e6e6" stroke="#999"/><text x="8" y="11.500" font-size="8" fill="#6aa5d8" text-anchor="middle">123</text></g>
<g transform="translate(1127 288)"><rect x=".5" y=".5" width="15" height="15" fill="#fff" stroke="#444"/><rect x="3" y="3" width="9" height="2" fill="#5b9bd5"/><rect x="3" y="7" width="6" height="2" fill="#5b9bd5"/><rect x="3" y="11" width="3" height="2" fill="#5b9bd5"/></g>
<g transform="translate(1155 288)"><rect x=".5" y=".5" width="15" height="15" fill="#efefef" stroke="#444"/><path d="M3 9l3-4 3 4z" fill="#3c9a5f"/><path d="M9 5h5l-2.500 4z" fill="#d13438"/><path d="M2 12h12" stroke="#777"/></g>
<g transform="translate(1015 312)"><path d="M.5 15V.5h15v5M1 4h15M6 16H.5" class="ic"/><rect x="3" y="7" width="3" height="3" fill="#888"/><path d="M7 7h9l-3.500 4v5h-2v-5z" fill="#888" stroke="#444" stroke-width=".5"/></g>
<g transform="translate(1043 312)"><rect x=".5" y=".5" width="15" height="15" fill="#fff" stroke="#666"/><path d="M0 5.500h16M0 10.500h16M5.500 0v16M10.500 0v16" stroke="#888" fill="none"/></g>
<rect x="1069" y="310" width="21" height="21" fill="#d8d6d4" stroke="#605e5c" stroke-width="2"/>
<g transform="translate(1072 313)"><rect x=".5" y=".5" width="14" height="14" fill="#5b9bd5" stroke="#444" stroke-width=".6"/><path d="M0 5h15M0 10h15M5 0v15M10 0v15" stroke="#fff" fill="none"/><rect width="15" height="2" fill="#aaa"/></g>
<text x="1106" y="326" font-size="15" font-weight="bold" fill="#3a7fb8" text-anchor="middle">R</text>
<text x="1135" y="325" font-size="15" font-weight="bold" fill="#2b88d8" text-anchor="middle">Py</text>
<g transform="translate(1155 313)" fill="none"><path class="ic" d="M0 15.500h16M0 5h11M0 10h5"/><circle cx="13" cy="3" r="2" stroke="#2b88d8"/><path d="M3 8v4M8 3v4" stroke="#777"/><circle cx="8" cy="10" r="1.500" stroke="#777"/></g>
<g transform="translate(1015 336)"><rect x="6" y="0" width="10" height="5" class="bl" stroke="#1e6fb5" stroke-width=".6"/><rect x="6" y="6" width="10" height="5" class="bl" stroke="#1e6fb5" stroke-width=".6"/><rect x="6" y="12" width="10" height="5" class="bl" stroke="#1e6fb5" stroke-width=".6"/><rect x="0" y="6" width="4" height="5" class="bl"/><path d="M4 8.500h2" stroke="#333"/></g>
<path d="M1043.500 337.500h15v11h-9l-3 3v-3h-3z" fill="#fff" stroke="#2b88d8" stroke-width="1.100"/>
<g transform="translate(1070 336)"><rect x="1" y="1" width="16" height="15" fill="#fff" stroke="#2b88d8"/><path d="M5 14l4-8 5-3v5l-5 3-2 4z" class="bl"/><path d="M3 0h3v5l-1.500 2L3 5z" fill="#d86a1a"/><circle cx="14" cy="14" r="2.500" fill="#d86a1a"/></g>
<g transform="translate(1099 337)"><rect x=".5" y="1.500" width="15" height="13" rx="3" fill="#fff" stroke="#444"/><circle cx="5" cy="10" r="2" fill="none" stroke="#444"/><circle cx="11" cy="10" r="2" fill="none" stroke="#444"/><path d="M7 10h2" stroke="#444"/></g>
<g fill="#444"><circle cx="1129" cy="343.500" r=".9"/><circle cx="1135" cy="343.500" r=".9"/><circle cx="1141" cy="343.500" r=".9"/></g>

<path d="M1005 363.500h180" stroke="#d2d0ce" stroke-dasharray="3 2"/>
<path d="M1015 371.500h16M1015 386.500h16" stroke="#9a9a9a" stroke-dasharray="1.500 1"/><rect x="1017" y="375" width="13" height="8" fill="#5b9bd5"/><rect x="1020" y="384" width="7" height="1.500" fill="#aaa"/><path d="M1015.500 374v10M1031.500 374v10" stroke="#ccc"/>
<path d="M1005 395.500h180" stroke="#d8d6d4"/>

<rect x="1027.500" y="403.500" width="20" height="19" fill="none" stroke="#252423" stroke-dasharray="1.500 1"/><path d="M1027 408.500h20M1027 413h20M1027 417.500h20" stroke="#252423" stroke-dasharray="1.500 1"/>
<rect x="1017" y="427" width="40" height="3" rx="1.500" fill="#f2c811"/>
<path d="M1068.500 405.500h17v5h-17zM1085.500 408h2v6h-10v4" fill="none" stroke="#252423" stroke-width="1.100"/><rect x="1075" y="418.500" width="4" height="9" fill="none" stroke="#252423" stroke-width="1.100"/>
<circle cx="1115.500" cy="412" r="7.500" fill="none" stroke="#252423" stroke-width="1"/><path d="M1109 415l3-2 2 2 3-3 4 2M1113 419v-4M1116 419v-4M1119 418v-3" fill="none" stroke="#333"/><path d="M1121 417.500l6 6" stroke="#252423" stroke-width="1.100"/>

<rect x="1179" y="430" width="6" height="175" rx="3" fill="#d2d0ce"/>

<text x="1017" y="448" class="fd">Filas</text>
<rect x="1009.500" y="458.500" width="169" height="61" fill="#fdfdfd" stroke="#bdbbb9" stroke-dasharray="3 2"/>
<rect x="1012.500" y="462.500" width="163" height="22" rx="1" fill="#edebe9" stroke="#c8c6c4"/>
<rect x="1012.500" y="487.500" width="163" height="22" rx="1" fill="#edebe9" stroke="#c8c6c4"/>
<text x="1017" y="478" class="ps" textLength="74" lengthAdjust="spacingAndGlyphs">WBS LEVEL 01</text>
<text x="1017" y="503" class="ps" textLength="75" lengthAdjust="spacingAndGlyphs">WBS LEVEL 02</text>
<use href="#pc" x="1146" y="471"/><use href="#cl" x="1163" y="470"/>
<use href="#pc" x="1146" y="496"/><use href="#cl" x="1163" y="495"/>
<text x="1017" y="543" class="fd">Columnas</text>
<rect x="1009.500" y="552.500" width="169" height="36" fill="#fdfdfd" stroke="#bdbbb9" stroke-dasharray="3 2"/>
<rect x="1012.500" y="556.500" width="163" height="22" rx="1" fill="#edebe9" stroke="#c8c6c4"/>
<text x="1017" y="572" class="ps" textLength="89" lengthAdjust="spacingAndGlyphs">Fecha calendario</text>
<use href="#pc" x="1146" y="565"/><use href="#cl" x="1163" y="564"/>
<text x="1017" y="612" class="fd">Valores</text>
<rect x="1009.500" y="621.500" width="169" height="36" fill="#fdfdfd" stroke="#bdbbb9" stroke-dasharray="3 2"/>
<rect x="1012.500" y="625.500" width="163" height="22" rx="1" fill="#edebe9" stroke="#c8c6c4"/>
<text x="1017" y="641" class="ps" textLength="126" lengthAdjust="spacingAndGlyphs">%TG Valor DISTRIBUIDO</text>
<use href="#pc" x="1146" y="634"/><use href="#cl" x="1163" y="633"/>
<text x="1019" y="688" font-size="15" font-weight="bold" fill="#484644" textLength="120" lengthAdjust="spacingAndGlyphs">Obtener detalles</text>

<!-- fields pane -->
<rect x="1186" y="162" width="164" height="536" fill="#f3f2f1"/>
<text x="1198" y="192" font-size="15.500" fill="#484644" stroke="#484644" stroke-width=".2" textLength="59" lengthAdjust="spacingAndGlyphs">Campos</text>
<path d="M1347 182l3 3.500M1347 190l3-3.500" fill="none" stroke="#605e5c"/>
<rect x="1190.500" y="215.500" width="170" height="28" rx="2" fill="#fff" stroke="#c8c6c4"/>
<circle cx="1212" cy="226" r="4.800" fill="none" stroke="#252423" stroke-width="1"/><path d="M1208 230l-5 5" stroke="#8a3a2a" stroke-width="1.200"/>
<text x="1226" y="234" class="fd" textLength="37" lengthAdjust="spacingAndGlyphs">Buscar</text>
<path d="M1186 248.500h164" stroke="#e1dfdd"/>

<path d="M1191 270l5 5 6-5" class="bch"/><path d="M1191 297l5 5 6-5" class="och"/><path d="M1191 324l5 5 6-5" class="bch"/><path d="M1191 351l5 5 6-5" class="och"/><path d="M1191 378l5 5 6-5" class="bch"/>
<path d="M1215 264l6.500 6.500-6.500 6.500-6.500-6.500z" fill="#f6d07a"/><rect x="1214" y="266" width="2" height="5" fill="#333"/><rect x="1214" y="272" width="2" height="2" fill="#333"/>
<text x="1234" y="275" class="fd">calendario</text>
<use href="#tbl" x="1209" y="292"/><text x="1234" y="302" class="fd" textLength="98" lengthAdjust="spacingAndGlyphs">Calendario prueba</text>
<use href="#tbl" x="1209" y="319"/><text x="1234" y="329" class="fd" textLength="81" lengthAdjust="spacingAndGlyphs">Calendarioauto</text>
<use href="#tbl" x="1209" y="346"/><text x="1234" y="356" class="fd" textLength="40" lengthAdjust="spacingAndGlyphs">PCOMP</text>
<use href="#tbl" x="1209" y="373"/><text x="1234" y="383" class="fd" style="fill:#252423" stroke="#252423" stroke-width=".2" textLength="72" lengthAdjust="spacingAndGlyphs">TIMEMONTH</text>
<circle cx="1222" cy="387" r="6" fill="#f2c811"/><path d="M1219.500 387l2 2 3-3.500" fill="none" stroke="#333" stroke-width="1.100"/>

<!-- tab bar -->
<rect x="41" y="669" width="1144" height="29" fill="#f3f2f1"/>
<path d="M41.500 669v29M80.500 669v29M151.500 669v29M228.500 669v29M310.500 669v29M451.500 669v29" stroke="#c8c6c4"/>
<rect x="229" y="669" width="81" height="29" fill="#fff"/>
<path d="M51 679v10l-5-5zM69 679v10l5-5z" fill="#c8cdd2"/>
<text x="115.500" y="691" class="sh">PPTO</text><text x="190" y="691" class="sh">Brecha</text><text x="270" y="691" class="sh" style="fill:#252423">Curva S</text><text x="380.500" y="691" class="sh">Control de avance</text>
<rect x="451" y="672" width="39" height="26" fill="#f2c811"/><path d="M470.500 680v10M465.500 685h10" stroke="#3b3a39" stroke-width="1.300"/>
</svg>
</body></html>
